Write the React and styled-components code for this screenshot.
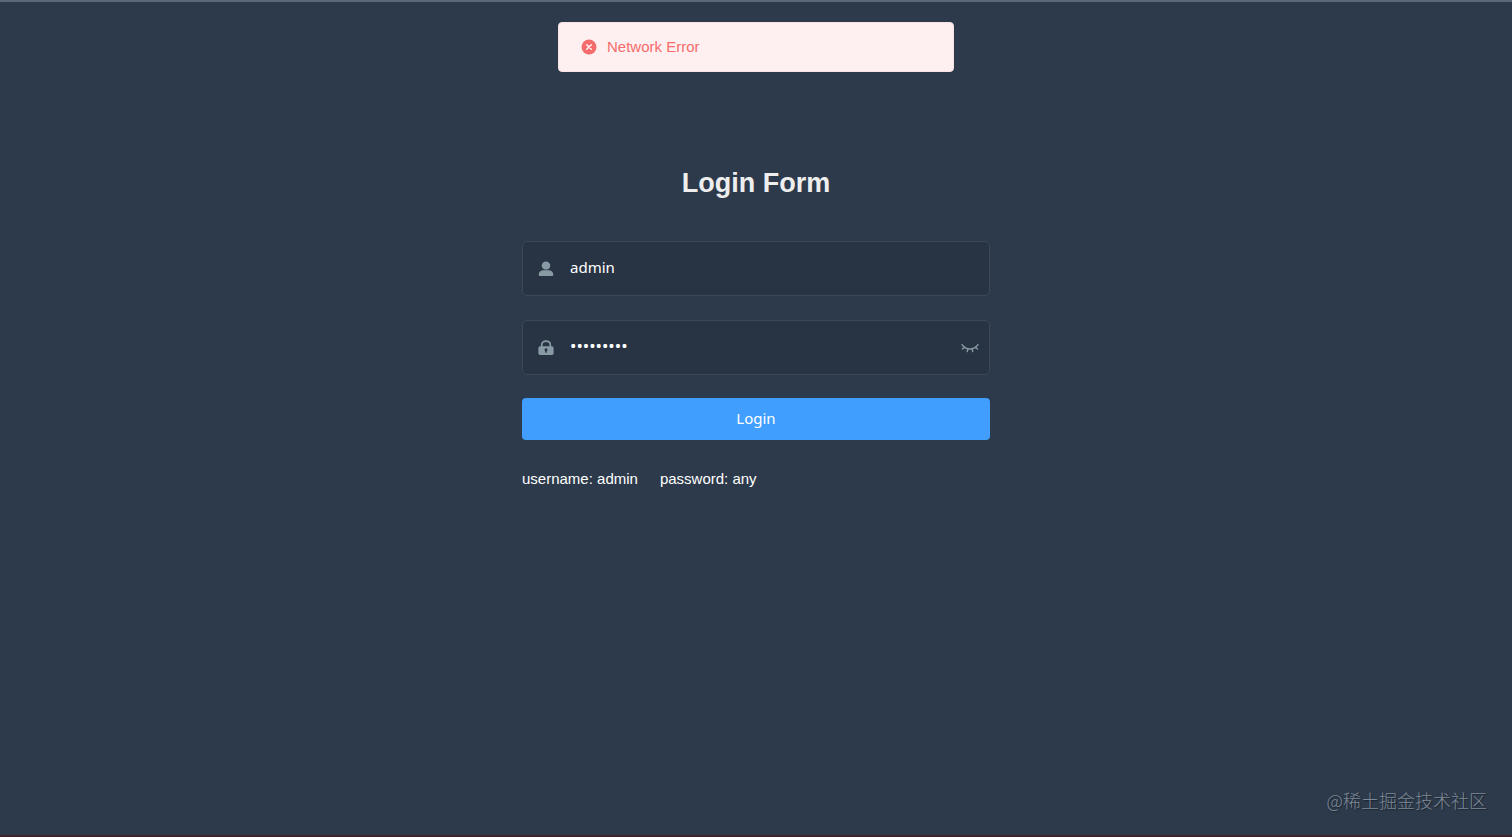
import React, { useState } from "react"
import styled, { createGlobalStyle } from "styled-components"

const bg = "#2d3a4b"
const dark = "#283443"
const gray = "#889aa4"

const GlobalStyle = createGlobalStyle`
  * {
    box-sizing: border-box;
  }

  body {
    margin: 0;
    background: ${bg};
    font-family: "Liberation Sans", Arial, sans-serif;
  }
`

const Page = styled.div`
  display: flex;
  flex-direction: column;
  align-items: center;
  min-height: 100vh;
  padding: 0 20px;
  border-top: 2px solid #5b6878;
  border-bottom: 2px solid #40222a;
`

const Message = styled.div`
  display: flex;
  align-items: center;
  gap: 10px;
  width: 100%;
  max-width: 396px;
  margin-top: 20px;
  padding: 15px 22px;
  border: 1px solid #fde2e2;
  border-radius: 4px;
  background: #fef0f0;
  color: #f56c6c;
  font-size: 15px;
  line-height: 18px;
`

const Form = styled.form`
  width: 100%;
  max-width: 468px;
  margin-top: 95px;
`

const Title = styled.h3`
  margin: 0 0 42px;
  color: #eeeeee;
  font-size: 27px;
  line-height: 32px;
  text-align: center;
`

const Field = styled.div`
  display: flex;
  align-items: center;
  height: 55px;
  padding: 0 10px 0 15px;
  border: 1px solid #3c4858;
  border-radius: 5px;
  background: ${dark};
  color: ${gray};

  & + & {
    margin-top: 24px;
  }
`

const FieldLabel = styled.label`
  display: flex;
  margin-right: 16px;
`

const Input = styled.input`
  flex: 1;
  min-width: 0;
  height: 50px;
  padding: 0 0 4px;
  border: 0;
  outline: 0;
  background: transparent;
  color: #ffffff;
  font-family: "Noto Sans", sans-serif;
  font-size: ${props => props.type === 'password' ? '17px' : '15px'};
`

const EyeButton = styled.button`
  display: flex;
  padding: 0;
  border: 0;
  background: transparent;
  color: ${gray};
  cursor: pointer;
`

const LoginButton = styled.button`
  display: block;
  width: 100%;
  height: 42px;
  margin-top: 23px;
  padding: 0 0 2px;
  border: 0;
  border-radius: 4px;
  background: #409eff;
  color: #ffffff;
  font-family: "Noto Sans", sans-serif;
  font-size: 15px;
  cursor: pointer;
`

const Tips = styled.div`
  display: flex;
  gap: 22px;
  margin-top: 30px;
  color: #ffffff;
  font-size: 15px;
  line-height: 18px;
`

const Watermark = styled.footer`
  align-self: flex-end;
  margin-top: auto;
  padding: 0 5px 22px 0;
  color: #7e8894;
  font-family: "Noto Sans CJK SC", sans-serif;
  font-size: 18px;
  font-weight: 300;
  line-height: 26px;
  text-shadow: 1px 1px 1px #1c2531;
`

const ErrorIcon = () => (
  <svg width="16" height="16" viewBox="0 0 16 16" aria-hidden="true">
    <circle cx="8" cy="8" r="7.5" fill="#f56c6c" />
    <path d="M5.7 5.7l4.6 4.6M10.3 5.7l-4.6 4.6" stroke="#fff" strokeWidth="1.3" strokeLinecap="round" />
  </svg>
)

const UserIcon = () => (
  <svg width="16" height="16" viewBox="0 0 16 16" fill="currentColor" aria-hidden="true">
    <ellipse cx="8" cy="4.6" rx="4.3" ry="4" />
    <path d="M.7 13.4C.7 10.9 2.8 9.2 5.3 9.2h5.4c2.5 0 4.6 1.7 4.6 4.2 0 1-.6 1.6-1.6 1.6H2.3C1.3 15 .7 14.4.7 13.4z" />
  </svg>
)

const LockIcon = () => (
  <svg width="16" height="16" viewBox="0 0 16 16" aria-hidden="true">
    <path d="M3.7 7V4.9C3.7 2.7 5.5 1.2 8 1.2s4.3 1.5 4.3 3.7V7" fill="none" stroke="currentColor" strokeWidth="1.7" />
    <rect x=".4" y="6.2" width="15.2" height="8.8" rx="1.8" fill="currentColor" />
    <circle cx="8" cy="9.7" r="1.5" fill={dark} />
    <path d="M7.3 10h1.4v2.8H7.3z" fill={dark} />
  </svg>
)

const EyeClosedIcon = () => (
  <svg width="18" height="16" viewBox="0 0 18 16" fill="none" stroke="currentColor" strokeWidth="1.4" strokeLinecap="round" aria-hidden="true">
    <path d="M1 4.6c2 2.9 4.8 4.4 8 4.4s6-1.5 8-4.4" />
    <path d="M3.7 7.4L1.4 9M7 8.8l-.8 2.8M11 8.8l.8 2.8M14.3 7.4L16.6 9" />
  </svg>
)

const App = () => {
  const [username, setUsername] = useState('admin')
  const [password, setPassword] = useState('adminpass')
  const [visible, setVisible] = useState(false)

  return (
    <>
      <GlobalStyle />
      <Page>
        <Message role="alert">
          <ErrorIcon />
          <span>Network Error</span>
        </Message>
        <Form onSubmit={e => e.preventDefault()}>
          <Title>Login Form</Title>
          <Field>
            <FieldLabel htmlFor="username" aria-label="Username"><UserIcon /></FieldLabel>
            <Input id="username" type="text" value={username} onChange={e => setUsername(e.target.value)} />
          </Field>
          <Field>
            <FieldLabel htmlFor="password" aria-label="Password"><LockIcon /></FieldLabel>
            <Input
              id="password"
              type={visible ? 'text' : 'password'}
              value={password}
              onChange={e => setPassword(e.target.value)}
            />
            <EyeButton type="button" aria-label="Show password" onClick={() => setVisible(!visible)}>
              <EyeClosedIcon />
            </EyeButton>
          </Field>
          <LoginButton type="submit">Login</LoginButton>
          <Tips>
            <span>username: admin</span>
            <span>password: any</span>
          </Tips>
        </Form>
        <Watermark>@稀土掘金技术社区</Watermark>
      </Page>
    </>
  )
}

export default App
